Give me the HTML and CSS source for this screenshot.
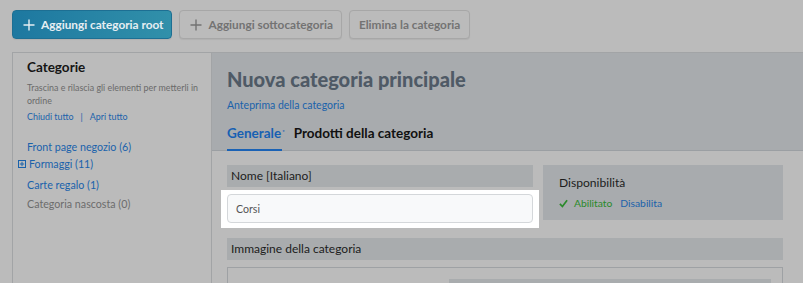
FILE: index.html
```html
<!DOCTYPE html>
<html lang="it">
<head>
<meta charset="utf-8">
<title>Categorie</title>
<link rel="stylesheet" href="styles.css">
</head>
<body>
<div class="toolbar">
  <button class="btn btn-primary">
    <svg class="plus" viewBox="0 0 12 12" width="12" height="12"><path d="M6 0.5V11.5M0.5 6H11.5" stroke="currentColor" stroke-width="1.4" fill="none"/></svg>
    <span>Aggiungi categoria root</span>
  </button>
  <button class="btn">
    <svg class="plus" viewBox="0 0 12 12" width="12" height="12"><path d="M6 0.5V11.5M0.5 6H11.5" stroke="currentColor" stroke-width="1.4" fill="none"/></svg>
    <span>Aggiungi sottocategoria</span>
  </button>
  <button class="btn btn-text">Elimina la categoria</button>
</div>

<div class="layout">
  <aside class="sidebar">
    <h2 class="side-title">Categorie</h2>
    <p class="side-desc">Trascina e rilascia gli elementi per metterli in ordine</p>
    <div class="side-actions"><a href="#">Chiudi tutto</a><span class="sep">|</span><a href="#">Apri tutto</a></div>
    <ul class="tree">
      <li class="tree-item"><a href="#">Front page negozio (6)</a></li>
      <li class="tree-item tree-parent">
        <svg class="expander" viewBox="0 0 8 8" width="8" height="8"><rect x="0.5" y="0.5" width="7" height="7" fill="none" stroke="currentColor"/><path d="M4 1.8V6.2M1.8 4H6.2" stroke="currentColor" stroke-width="1"/></svg>
        <a href="#">Formaggi (11)</a>
      </li>
      <li class="tree-item item-gift"><a href="#">Carte regalo (1)</a></li>
      <li class="tree-item item-hidden"><a href="#">Categoria nascosta (0)</a></li>
    </ul>
  </aside>

  <main class="main">
    <header class="main-head">
      <h1 class="title">Nuova categoria principale</h1>
      <a class="preview" href="#">Anteprima della categoria</a>
      <nav class="tabs">
        <a class="tab tab-active" href="#">Generale<span class="mark">*</span></a>
        <a class="tab" href="#">Prodotti della categoria</a>
      </nav>
    </header>

    <section class="content">
      <div class="row">
        <div class="col-name">
          <div class="label-bar">Nome [Italiano]</div>
          <div class="spotlight">
            <input class="field" type="text" value="Corsi">
          </div>
        </div>
        <div class="avail">
          <div class="avail-title">Disponibilità</div>
          <div class="avail-opts">
            <span class="enabled"><svg class="check" viewBox="0 0 10 10" width="9" height="9"><path d="M1 5.4L3.8 8.3L9 1.5" stroke="currentColor" stroke-width="1.9" fill="none"/></svg>Abilitato</span>
            <a href="#">Disabilita</a>
          </div>
        </div>
      </div>
      <div class="label-bar wide">Immagine della categoria</div>
      <div class="image-box">
        <div class="image-bar"></div>
      </div>
    </section>
  </main>
</div>
</body>
</html>
```
FILE: styles.css
```css
* { box-sizing: border-box; }
html, body { margin: 0; padding: 0; }
body {
  background: #bbbbbb;
  font-family: "Lato", "Open Sans", sans-serif;
  font-size: 12px;
  color: #222;
  width: 803px;
  height: 283px;
  overflow: hidden;
}
a { text-decoration: none; color: #1a62ab; }

.toolbar {
  display: flex;
  gap: 7px;
  padding: 10px 12px 0;
}
.btn {
  display: flex;
  align-items: center;
  gap: 6px;
  height: 29px;
  padding: 0 8px 0 10px;
  border: 1px solid #a7a7a7;
  border-radius: 4px;
  background: #bbbbbb;
  color: #737373;
  font-family: "Lato", sans-serif;
  font-weight: 700;
  font-size: 11.8px;
  box-shadow: 0 1px 1px rgba(0,0,0,0.06);
}
.btn-text { padding: 0 9px; }
.btn-primary {
  background: linear-gradient(90deg, #1d78a0, #3190aa);
  border-color: #1d6f93;
  color: #e6eef2;
}
.plus { flex: none; }

.layout {
  display: grid;
  grid-template-columns: 199px 1fr;
  margin: 13px 0 0 12px;
  border-top: 1px solid #a2a4a6;
  border-left: 1px solid #a2a4a6;
  height: 240px;
}

.sidebar {
  border-right: 1px solid #a2a4a6;
  padding: 6px 6px 0 14px;
}
.side-title {
  margin: 0;
  font-family: "Lato", sans-serif;
  font-size: 13.5px;
  font-weight: 700;
  color: #151515;
  line-height: 16px;
}
.side-desc {
  margin: 6px 0 0;
  font-size: 8.9px;
  line-height: 13px;
  color: #6a6a6a;
}
.side-actions {
  margin-top: 3px;
  font-size: 8.9px;
  line-height: 13px;
}
.side-actions .sep { color: #1a62ab; margin: 0 7px; }
.tree {
  list-style: none;
  margin: 16px 0 0;
  padding: 0;
}
.tree-item { font-size: 10.7px; line-height: 16px; }
.tree-parent {
  display: flex;
  align-items: center;
  gap: 3px;
  margin: 1px 0 0 -9px;
  color: #1a62ab;
}
.expander { flex: none; }
.item-gift { margin-top: 5px; }
.item-hidden { margin-top: 3px; }
.item-hidden a { color: #6c6c6c; }

.main { display: flex; flex-direction: column; }
.main-head {
  display: flex;
  flex-direction: column;
  align-items: flex-start;
  background: #a8abae;
  border-bottom: 1px solid #9b9fa3;
  padding: 14px 15px 0;
  height: 98px;
}
.title {
  margin: 0;
  font-family: "Lato", sans-serif;
  font-weight: 900;
  font-size: 20px;
  line-height: 24px;
  color: #4f5a66;
}
.preview {
  display: block;
  margin-top: 7px;
  font-size: 10.5px;
  line-height: 14px;
  color: #1a62ab;
}
.tabs { display: flex; gap: 12px; margin-top: auto; margin-bottom: -1px; }
.tab {
  font-family: "Lato", sans-serif;
  font-weight: 700;
  font-size: 13.5px;
  line-height: 18px;
  color: #111;
  padding-bottom: 9px;
}
.mark {
  display: inline-block;
  font-size: 6px;
  line-height: 6px;
  vertical-align: 4px;
  margin: 0 -3px 0 1px;
}
.tab-active { color: #1760b3; border-bottom: 2px solid #1a62b5; padding-bottom: 7px; }

.content { padding: 14px 20px 0 15px; }
.row { display: flex; gap: 10px; align-items: flex-start; }
.col-name { width: 306px; flex: none; }
.label-bar {
  background: #a9acae;
  height: 22px;
  line-height: 22px;
  padding: 0 4px;
  font-size: 12px;
  color: #1c1c1c;
}
.spotlight {
  background: #ffffff;
  margin: 3px -6px 0;
  padding: 4px 6px 5px;
}
.field {
  display: block;
  width: 100%;
  height: 29px;
  border: 1px solid #d4d7da;
  border-radius: 4px;
  background: #f8f9fa;
  padding: 0 8px;
  font-family: "Lato", sans-serif;
  font-size: 10.6px;
  color: #555;
}
.avail {
  flex: 1;
  background: #a8abae;
  height: 55px;
  padding: 9px 16px 0;
}
.avail-title { font-size: 12.1px; line-height: 18px; color: #1c1c1c; }
.avail-opts { display: flex; gap: 8px; margin-top: 3px; font-size: 10.3px; line-height: 16px; }
.enabled { color: #2a8a2a; display: flex; align-items: center; gap: 6px; }
.check { flex: none; }

.wide { margin-top: 10px; }
.image-box {
  margin-top: 7px;
  border: 1px solid #9ea1a4;
  height: 40px;
  padding: 11px 11px 0 221px;
}
.image-bar { background: #a9acae; height: 20px; }
```
